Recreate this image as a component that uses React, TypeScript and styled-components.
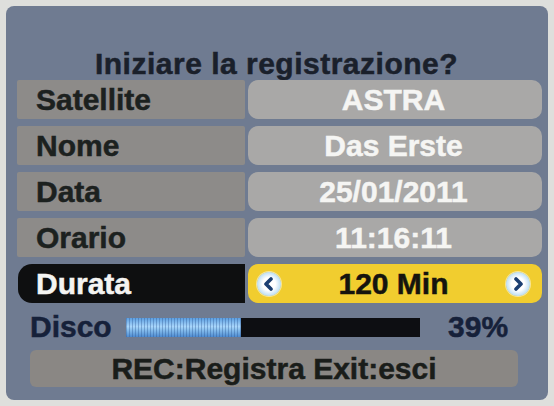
import styled, { createGlobalStyle } from "styled-components";

const GlobalStyle = createGlobalStyle`
  html, body {
    margin: 0;
    padding: 0;
    background: #dedfdc;
  }
  body {
    font-family: "Liberation Sans", Arial, sans-serif;
    -webkit-text-stroke: 0.5px currentColor;
  }
`;

const Screen = styled.div`
  width: 554px;
  height: 406px;
  padding: 6px;
  box-sizing: border-box;
`;

const Panel = styled.div`
  width: 542px;
  height: 394px;
  box-sizing: border-box;
  background: #6f7b91;
  border-radius: 8px;
  padding: 42px 6px 0 11px;
  display: flex;
  flex-direction: column;
`;

const Title = styled.div`
  height: 32px;
  line-height: 32px;
  text-align: center;
  font-size: 30px;
  font-weight: bold;
  color: #1a202b;
  letter-spacing: 0.5px;
  padding-right: 6px;
`;

const Rows = styled.div`
  display: flex;
  flex-direction: column;
  gap: 7px;
`;

const Row = styled.div`
  display: grid;
  grid-template-columns: 228px 1fr;
  column-gap: 3px;
  height: 39px;
`;

interface ActiveProps {
  $active?: boolean;
}

const Label = styled.div<ActiveProps>`
  display: flex;
  align-items: center;
  padding-left: ${(p) => (p.$active ? "18px" : "19px")};
  margin-left: ${(p) => (p.$active ? "1px" : "0")};
  font-size: 30px;
  font-weight: bold;
  background: ${(p) => (p.$active ? "#0e0f10" : "#8d8b89")};
  color: ${(p) => (p.$active ? "#f4f4f2" : "#1c211f")};
  border-radius: ${(p) => (p.$active ? "14px 0 0 14px" : "2px")};
`;

const Value = styled.div<ActiveProps>`
  display: flex;
  align-items: center;
  justify-content: space-between;
  padding: 0 12px 0 9px;
  font-size: 30px;
  font-weight: bold;
  background: ${(p) => (p.$active ? "#f1cd2f" : "#a9a8a7")};
  color: ${(p) => (p.$active ? "#15140e" : "#f5f5f3")};
  border-radius: 10px;
`;

const ValueText = styled.span`
  flex: 1;
  text-align: center;
`;

const ArrowButton = styled.span`
  width: 24px;
  height: 24px;
  border-radius: 50%;
  background: radial-gradient(circle, #ffffff 38%, #b9dcf3 72%, #eef6fb 100%);
  box-shadow: 0 0 0 1px rgba(255, 255, 255, 0.5);
  display: flex;
  align-items: center;
  justify-content: center;
  flex: none;
  -webkit-text-stroke: 0;
`;

const DiskRow = styled.div`
  margin-top: 4px;
  height: 40px;
  display: flex;
  align-items: center;
  padding-left: 13px;
`;

const DiskLabel = styled.span`
  font-size: 30px;
  font-weight: bold;
  color: #16213a;
  width: 96px;
`;

const Bar = styled.div`
  width: 294px;
  height: 19px;
  background: #0d0e12;
  display: flex;
`;

const BarFill = styled.div`
  height: 100%;
  background:
    repeating-linear-gradient(90deg, rgba(40, 80, 140, 0.35) 0 1px, transparent 1px 3px),
    linear-gradient(180deg, #5c9ee0 0%, #a9d6fb 45%, #8cc2ef 60%, #4c8ad0 100%);
`;

const Percent = styled.span`
  margin-left: 28px;
  font-size: 30px;
  font-weight: bold;
  color: #16213a;
`;

const Footer = styled.div`
  margin-top: 3px;
  margin-left: 13px;
  width: 488px;
  height: 37px;
  background: #8a8784;
  border-radius: 6px;
  display: flex;
  align-items: center;
  justify-content: center;
  font-size: 30px;
  font-weight: bold;
  color: #1a1d1a;
`;

const Chevron = ({ dir }: { dir: "left" | "right" }) => (
  <svg width="14" height="14" viewBox="0 0 14 14">
    <path
      d={dir === "left" ? "M9 2 L4 7 L9 12" : "M5 2 L10 7 L5 12"}
      fill="none"
      stroke="#1b3f72"
      strokeWidth="3.6"
      strokeLinecap="round"
      strokeLinejoin="round"
    />
  </svg>
);

const fields = [
  { label: "Satellite", value: "ASTRA" },
  { label: "Nome", value: "Das Erste" },
  { label: "Data", value: "25/01/2011" },
  { label: "Orario", value: "11:16:11" },
];

const diskUsed = 39;

export default function App() {
  return (
    <Screen>
      <GlobalStyle />
      <Panel>
        <Title>Iniziare la registrazione?</Title>
        <Rows>
          {fields.map((f) => (
            <Row key={f.label}>
              <Label>{f.label}</Label>
              <Value>
                <ValueText>{f.value}</ValueText>
              </Value>
            </Row>
          ))}
          <Row>
            <Label $active>Durata</Label>
            <Value $active>
              <ArrowButton>
                <Chevron dir="left" />
              </ArrowButton>
              <ValueText>120 Min</ValueText>
              <ArrowButton>
                <Chevron dir="right" />
              </ArrowButton>
            </Value>
          </Row>
        </Rows>
        <DiskRow>
          <DiskLabel>Disco</DiskLabel>
          <Bar>
            <BarFill style={{ width: `${diskUsed}%` }} />
          </Bar>
          <Percent>{diskUsed}%</Percent>
        </DiskRow>
        <Footer>REC:Registra Exit:esci</Footer>
      </Panel>
    </Screen>
  );
}
